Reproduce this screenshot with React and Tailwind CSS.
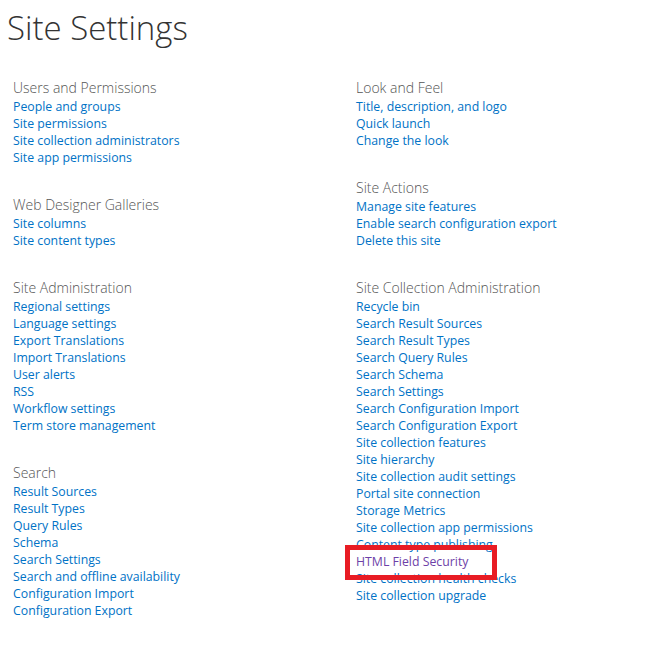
import React from "react";

const left = [
  { title: "Users and Permissions", links: ["People and groups", "Site permissions", "Site collection administrators", "Site app permissions"] },
  { title: "Web Designer Galleries", links: ["Site columns", "Site content types"] },
  { title: "Site Administration", links: ["Regional settings", "Language settings", "Export Translations", "Import Translations", "User alerts", "RSS", "Workflow settings", "Term store management"] },
  { title: "Search", links: ["Result Sources", "Result Types", "Query Rules", "Schema", "Search Settings", "Search and offline availability", "Configuration Import", "Configuration Export"] },
];

const right = [
  { title: "Look and Feel", links: ["Title, description, and logo", "Quick launch", "Change the look"] },
  { title: "Site Actions", links: ["Manage site features", "Enable search configuration export", "Delete this site"] },
  { title: "Site Collection Administration", links: ["Recycle bin", "Search Result Sources", "Search Result Types", "Search Query Rules", "Search Schema", "Search Settings", "Search Configuration Import", "Search Configuration Export", "Site collection features", "Site hierarchy", "Site collection audit settings", "Portal site connection", "Storage Metrics", "Site collection app permissions", "Content type publishing", "HTML Field Security", "Site collection health checks", "Site collection upgrade"] },
];

function Section({ s }) {
  return (
    <div className="mb-[29px]">
      <div className="h-[20px] leading-[19px] text-[14px] text-[#555] font-light whitespace-nowrap">{s.title}</div>
      <ul>
        {s.links.map((l) =>
          l === "HTML Field Security" ? (
            <li key={l} className="relative z-10 h-[17px] leading-[17px] text-[12.3px] whitespace-nowrap">
              <div className="absolute left-[-11px] top-[-8px] w-[152px] h-[35px] border-[5px] border-[#e81c24] pointer-events-none" />
              <a className="relative text-[#6e3fa8]">{l}</a>
            </li>
          ) : (
            <li key={l} className="h-[17px] leading-[17px] text-[12.3px] text-[#0072c6] whitespace-nowrap">
              <a>{l}</a>
            </li>
          )
        )}
      </ul>
    </div>
  );
}

export default function App() {
  return (
    <div className="w-[668px] h-[669px] bg-white overflow-hidden" style={{ fontFamily: "'Open Sans', 'Noto Sans', sans-serif" }}>
      <div className="h-[78px] pl-[7px] pt-[5px]">
        <h1 className="text-[33px] leading-[46px] font-light text-[#333]">Site Settings</h1>
      </div>
      <div className="flex pl-[13px]">
        <div className="w-[343px]">
          {left.map((s) => <Section key={s.title} s={s} />)}
        </div>
        <div className="flex-1">
          {right.map((s) => <Section key={s.title} s={s} />)}
        </div>
      </div>
    </div>
  );
}
